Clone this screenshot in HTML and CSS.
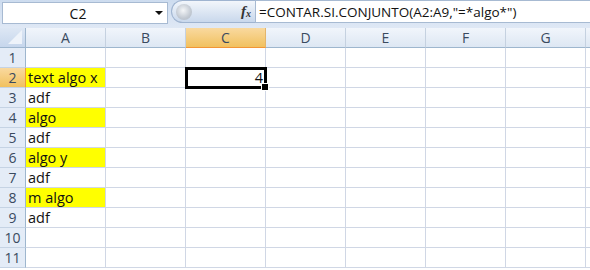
FILE: index.html
```html
<!DOCTYPE html>
<html>
<head>
<meta charset="utf-8">
<link rel="stylesheet" href="styles.css">
</head>
<body>
<div class="app">
  <div class="fbar">
    <div class="namebox">
      <span class="name">C2</span>
      <span class="arrow"></span>
    </div>
    <div class="pill">
      <span class="knob"></span>
      <span class="fx">f<sub>x</sub></span>
    </div>
    <div class="formula">=CONTAR.SI.CONJUNTO(A2:A9,"=*algo*")</div>
  </div>
  <div class="sheet">
    <div class="corner"><span class="tri"></span></div>
    <div class="ch">A</div><div class="ch">B</div><div class="ch sel">C</div><div class="ch">D</div><div class="ch">E</div><div class="ch">F</div><div class="ch">G</div><div class="ch rest"></div>

    <div class="rh">1</div><div class="c"></div><div class="c"></div><div class="c"></div><div class="c"></div><div class="c"></div><div class="c"></div><div class="c"></div><div class="c rest"></div>
    <div class="rh sel">2</div><div class="c y">text algo x</div><div class="c"></div><div class="c active">4<span class="handle"></span></div><div class="c"></div><div class="c"></div><div class="c"></div><div class="c"></div><div class="c rest"></div>
    <div class="rh">3</div><div class="c">adf</div><div class="c"></div><div class="c"></div><div class="c"></div><div class="c"></div><div class="c"></div><div class="c"></div><div class="c rest"></div>
    <div class="rh">4</div><div class="c y">algo</div><div class="c"></div><div class="c"></div><div class="c"></div><div class="c"></div><div class="c"></div><div class="c"></div><div class="c rest"></div>
    <div class="rh">5</div><div class="c">adf</div><div class="c"></div><div class="c"></div><div class="c"></div><div class="c"></div><div class="c"></div><div class="c"></div><div class="c rest"></div>
    <div class="rh">6</div><div class="c y">algo y</div><div class="c"></div><div class="c"></div><div class="c"></div><div class="c"></div><div class="c"></div><div class="c"></div><div class="c rest"></div>
    <div class="rh">7</div><div class="c">adf</div><div class="c"></div><div class="c"></div><div class="c"></div><div class="c"></div><div class="c"></div><div class="c"></div><div class="c rest"></div>
    <div class="rh">8</div><div class="c y">m algo</div><div class="c"></div><div class="c"></div><div class="c"></div><div class="c"></div><div class="c"></div><div class="c"></div><div class="c rest"></div>
    <div class="rh">9</div><div class="c">adf</div><div class="c"></div><div class="c"></div><div class="c"></div><div class="c"></div><div class="c"></div><div class="c"></div><div class="c rest"></div>
    <div class="rh">10</div><div class="c"></div><div class="c"></div><div class="c"></div><div class="c"></div><div class="c"></div><div class="c"></div><div class="c"></div><div class="c rest"></div>
    <div class="rh">11</div><div class="c"></div><div class="c"></div><div class="c"></div><div class="c"></div><div class="c"></div><div class="c"></div><div class="c"></div><div class="c rest"></div>
  </div>
</div>
</body>
</html>
```
FILE: styles.css
```css
html, body {
  margin: 0;
  padding: 0;
  background: #ffffff;
}
.app {
  width: 590px;
  height: 270px;
  overflow: hidden;
  font-family: "Open Sans", "Noto Sans", sans-serif;
}
.fbar {
  height: 28px;
  box-sizing: border-box;
  padding: 2px 0 4px 2px;
  background: linear-gradient(#cddcef, #dfe8f5);
  display: flex;
  align-items: stretch;
}
.namebox {
  width: 166px;
  box-sizing: border-box;
  background: #fff;
  border: 1px solid #a7bad2;
  position: relative;
  display: flex;
  align-items: center;
  justify-content: center;
  font-size: 14px;
  color: #111;
}
.name {
  margin-right: 14px;
}
.arrow {
  position: absolute;
  right: 4px;
  top: 8px;
  width: 0;
  height: 0;
  border-left: 4px solid transparent;
  border-right: 4px solid transparent;
  border-top: 4px solid #111;
}
.pill {
  margin-left: 3px;
  width: 84px;
  box-sizing: border-box;
  border-radius: 12px 0 0 12px;
  background: linear-gradient(#f2f6fb, #c9d8ec);
  border: 1px solid #9fb4d0;
  border-right: none;
  position: relative;
  margin-top: -2px;
  margin-bottom: 1px;
}
.knob {
  position: absolute;
  left: 4px;
  top: 3px;
  width: 16px;
  height: 16px;
  border-radius: 50%;
  background: radial-gradient(circle at 45% 40%, #f4f6f8 0, #c2c9d2 60%, #aeb8c4 100%);
}
.fx {
  position: absolute;
  right: 4px;
  top: 2px;
  font-family: "Liberation Serif", serif;
  font-style: italic;
  font-weight: bold;
  font-size: 15px;
  color: #333;
}
.fx sub {
  font-size: 10px;
  vertical-align: baseline;
  position: relative;
  top: 1px;
}
.formula {
  flex: 1;
  background: #fff;
  border-left: 1px solid #a7bad2;
  border-top: 1px solid #a7bad2;
  border-bottom: 1px solid #a7bad2;
  padding-left: 3px;
  font-size: 13.5px;
  line-height: 19px;
  color: #111;
  white-space: nowrap;
  margin-top: -2px;
  margin-bottom: 1px;
  padding-top: 2px;
}
.sheet {
  display: grid;
  grid-template-columns: 26px repeat(7, 80px) 1fr;
  grid-template-rows: 20px repeat(11, 20px);
  font-size: 14.5px;
}
.sheet > div {
  box-sizing: border-box;
}
.corner {
  background: linear-gradient(#dde7f4, #c6d6ec);
  border-right: 1px solid #9eb6ce;
  border-bottom: 1px solid #9eb6ce;
  position: relative;
}
.tri {
  position: absolute;
  right: 3px;
  bottom: 3px;
  width: 0;
  height: 0;
  border-left: 14px solid transparent;
  border-bottom: 14px solid #eef3fa;
}
.ch {
  background: linear-gradient(#f1f5fb, #dde7f3);
  border-right: 1px solid #c5d1e0;
  border-bottom: 1px solid #9eb6ce;
  text-align: center;
  color: #3a4a5f;
  font-size: 14px;
  line-height: 19px;
}
.ch.sel {
  background: linear-gradient(#f9d99f, #f1c15f);
  border-bottom-color: #f29536;
  border-right-color: #e3b56c;
}
.rh {
  background: #e4ecf7;
  border-right: 1px solid #9eb6ce;
  border-bottom: 1px solid #c5d3e4;
  text-align: center;
  color: #3a4a5f;
  font-size: 14px;
  line-height: 19px;
}
.rh.sel {
  background: linear-gradient(#f9d99f, #f1c15f);
  border-right-color: #f29536;
}
.c {
  border-right: 1px solid #d0d7e5;
  border-bottom: 1px solid #d0d7e5;
  padding-left: 2px;
  line-height: 19px;
  color: #111;
  white-space: nowrap;
}
.c.y {
  background: #ffff00;
}
.c.active {
  position: relative;
  text-align: right;
  padding-right: 2px;
  outline: 3px solid #000;
  outline-offset: -2px;
  z-index: 1;
}
.handle {
  position: absolute;
  right: -4px;
  bottom: -4px;
  width: 6px;
  height: 6px;
  background: #000;
  border: 1px solid #fff;
}
.rest {
  border-right: none;
}
```
